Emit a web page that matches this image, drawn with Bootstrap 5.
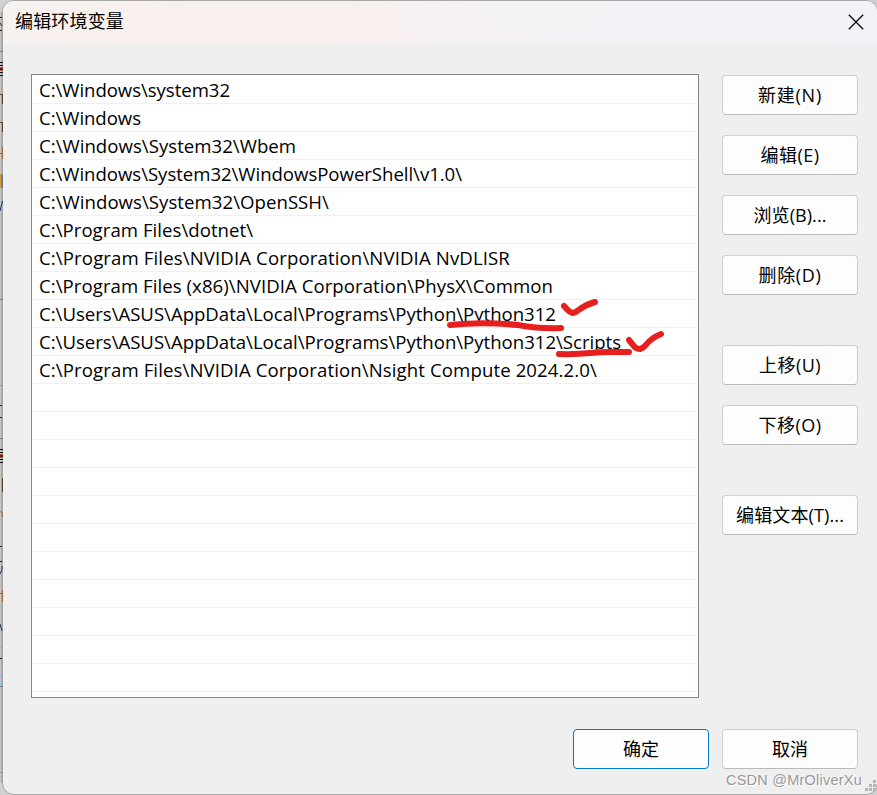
<!DOCTYPE html>
<html lang="zh-CN">
<head>
<meta charset="utf-8">
<meta name="viewport" content="width=device-width, initial-scale=1">
<title>编辑环境变量</title>
<link href="https://cdn.jsdelivr.net/npm/bootstrap@5.3.0/dist/css/bootstrap.min.css" rel="stylesheet">
<style>
html, body { height: 100%; }
body { background: #d0d0d0; font-family: "Open Sans", "Noto Sans CJK SC", sans-serif; font-size: 18px; color: #000; overflow: hidden; }
.backdrop { width: 877px; height: 795px; padding-left: 2px; }
.dialog { width: 876px; height: 795px; background: #efefef; border: 1px solid #a6a6a6; border-radius: 12px; overflow: hidden; }
.dialog-title { height: 43px; background: linear-gradient(90deg, #f6f2f0 0, #f9f0ed 22%, #f8f0ee 38%, #f2f3f7 72%, #f1f3f8 100%); padding: 0 13px 2px 12px; }
.dialog-body { padding: 30px 19px 0 28px; gap: 23px; }
.path-list { width: 668px; height: 624px; border: 1px solid #828790; border-radius: 0; background: #fff; overflow: hidden; padding: 1px 1px 0 1px; }
.path-list > li { height: 28px; line-height: 27px; padding: 0 0 0 6px; border: 0; border-bottom: 1px solid #f0f0f0; background: transparent; color: #000; font-size: 18.6px; white-space: pre; }
.dlg-btn { width: 136px; height: 40px; border: 1px solid #d0d0d0; border-bottom-color: #bababa; border-radius: 4px; background: #fdfdfd; color: #000; font-size: 18px; line-height: 1; padding: 0; }
.dlg-btn.is-default { border-color: #0078d4; }
.side { padding-top: 1px; gap: 20px; }
.gap-above { margin-top: 30px; }
.dialog-foot { padding: 31px 19px 0 0; gap: 13px; }
.edge, .marks { left: 0; top: 0; pointer-events: none; }
.credit { right: 15px; bottom: 5px; font: 14.5px/20px "Liberation Sans", sans-serif; color: #999; text-shadow: 1px 1px 0 #fff; white-space: pre; }
.grip { right: 0; bottom: 3px; }
</style>
</head>
<body>
<div class="backdrop position-relative overflow-hidden">
  <main class="dialog d-flex flex-column">
    <header class="dialog-title d-flex align-items-center justify-content-between">
      <span data-w="109">编辑环境变量</span>
      <svg width="16" height="16" viewBox="0 0 16 16" fill="none" stroke="#111" stroke-width="1.4"><path d="M.8.8l14.4 14.4M15.2.8L.8 15.2"/></svg>
    </header>
    <div class="dialog-body d-flex">
      <ul class="path-list list-group mb-0">
        <li class="list-group-item"><span data-w="191">C:\Windows\system32</span></li>
        <li class="list-group-item"><span data-w="102">C:\Windows</span></li>
        <li class="list-group-item"><span data-w="257">C:\Windows\System32\Wbem</span></li>
        <li class="list-group-item"><span data-w="423">C:\Windows\System32\WindowsPowerShell\v1.0\</span></li>
        <li class="list-group-item"><span data-w="290">C:\Windows\System32\OpenSSH\</span></li>
        <li class="list-group-item"><span data-w="214">C:\Program Files\dotnet\</span></li>
        <li class="list-group-item"><span data-w="471">C:\Program Files\NVIDIA Corporation\NVIDIA NvDLISR</span></li>
        <li class="list-group-item"><span data-w="514">C:\Program Files (x86)\NVIDIA Corporation\PhysX\Common</span></li>
        <li class="list-group-item"><span data-w="517">C:\Users\ASUS\AppData\Local\Programs\Python\Python312</span></li>
        <li class="list-group-item"><span data-w="582">C:\Users\ASUS\AppData\Local\Programs\Python\Python312\Scripts</span></li>
        <li class="list-group-item"><span data-w="558">C:\Program Files\NVIDIA Corporation\Nsight Compute 2024.2.0\</span></li>
        <li class="list-group-item"></li><li class="list-group-item"></li><li class="list-group-item"></li>
        <li class="list-group-item"></li><li class="list-group-item"></li><li class="list-group-item"></li>
        <li class="list-group-item"></li><li class="list-group-item"></li><li class="list-group-item"></li>
        <li class="list-group-item"></li><li class="list-group-item"></li>
      </ul>
      <div class="side d-flex flex-column">
        <button class="btn dlg-btn"><span data-w="64">新建(N)</span></button>
        <button class="btn dlg-btn"><span data-w="59">编辑(E)</span></button>
        <button class="btn dlg-btn"><span data-w="73">浏览(B)...</span></button>
        <button class="btn dlg-btn"><span data-w="63">删除(D)</span></button>
        <button class="btn dlg-btn gap-above"><span data-w="62">上移(U)</span></button>
        <button class="btn dlg-btn"><span data-w="63">下移(O)</span></button>
        <button class="btn dlg-btn gap-above"><span data-w="108">编辑文本(T)...</span></button>
      </div>
    </div>
    <footer class="dialog-foot d-flex justify-content-end">
      <button class="btn dlg-btn is-default">确定</button>
      <button class="btn dlg-btn">取消</button>
    </footer>
  </main>
  <!-- sliver of the window behind the dialog -->
  <svg class="edge position-absolute" width="3" height="795" fill="none">
    <path d="M1.8 12V783" stroke="#a8a8a8" stroke-width="2"/>
    <path d="M0 51.5H3M0 299.5H3M0 438.5H3M0 686.5H3" stroke="#777"/>
    <path d="M0 385.5H3M0 772.5H3" stroke="#999"/>
    <path d="M0 17.5H2M0 30.5H2M0 23l2 3M0 405.5H2M0 417.5H2M0 546.5H2M0 561.5H2" stroke="#222"/>
    <path d="M0 62.5H3M0 65.5H3M0 72.5H3M0 75.5H3M0 449.5H3M0 452.5H3M0 459.5H3M0 462.5H3" stroke="#111"/>
    <path d="M0 69H3M0 456H3" stroke="#7a1408" stroke-width="3"/>
    <path d="M0 94.5H2.5V104M0 122.5H2.5V132M2.5 478v14" stroke="#5c3d20"/>
    <path d="M0 153.5H3M2.5 147v12M0 593.5H3M2.5 590v12" stroke="#a5642c"/>
    <path d="M.5 174v14" stroke="#d29a40"/><path d="M2 174v14" stroke="#245a90"/>
    <path d="M2.5 201L0 211M0 574q3-5 2 -8M0 624l2 7" stroke="#16356e"/>
    <path d="M0 512q3-2 2 5" stroke="#a5642c"/>
    <path d="M0 647.5H2M0 676.5H2M0 684.5H2" stroke="#62bde8"/><path d="M0 658.5H2" stroke="#123"/>
  </svg>
  <svg class="marks position-absolute" width="877" height="795" fill="none" stroke="#e71f1f" stroke-width="6" stroke-linecap="round" stroke-linejoin="round">
    <path d="M450 325C475 322 498 323 518 325C535 328 545 329 561 328"/>
    <path d="M564 306Q570 313 573 313C579 312 580 306 595 302"/>
    <path d="M559 354C586 355 590 352 610 352L629 352"/>
    <path d="M629 340C634 346 635 349 640 349C648 347 644 341 661 334"/>
  </svg>
  <span class="credit position-absolute"><span data-w="136">CSDN @MrOliverXu</span></span>
  <svg class="grip position-absolute" width="12" height="12" fill="#b5b5b5"><path d="M8 0h3v3h-3zM4 4h3v3h-3zM8 4h3v3h-3zM0 8h3v3h-3zM4 8h3v3h-3zM8 8h3v3h-3z"/></svg>
</div>
<script src="https://cdn.jsdelivr.net/npm/bootstrap@5.3.0/dist/js/bootstrap.bundle.min.js"></script>
<script>
document.querySelectorAll('[data-w]').forEach(function (el) {
  var n = el.textContent.length;
  el.style.letterSpacing = ((+el.dataset.w - el.getBoundingClientRect().width) / n).toFixed(3) + 'px';
});
</script>
</body>
</html>
